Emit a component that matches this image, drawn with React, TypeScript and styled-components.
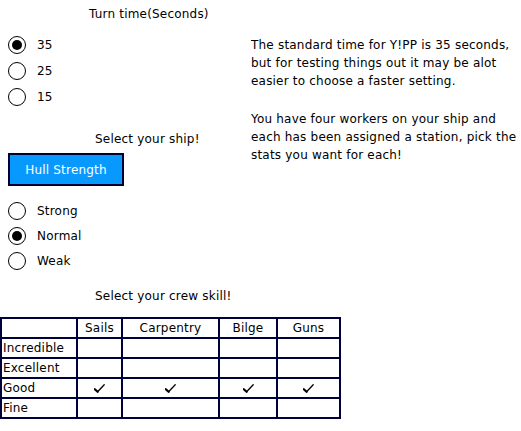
import React from "react";
import styled, { createGlobalStyle } from "styled-components";

const GlobalStyle = createGlobalStyle`
  html, body { margin: 0; padding: 0; background: #ffffff; }
  body {
    font-family: "DejaVu Sans", Verdana, sans-serif;
    font-size: 12px;
    letter-spacing: 0.2px;
    color: #000000;
  }
`;

const Page = styled.div`
  width: 521px;
  height: 431px;
  display: flex;
  flex-direction: column;
  overflow: hidden;
`;

const Heading = styled.div<{ $indent: number; $top: number }>`
  margin-top: ${(p) => p.$top}px;
  padding-left: ${(p) => p.$indent}px;
  height: 18px;
  line-height: 18px;
`;

const TopRow = styled.div`
  display: flex;
  margin-top: 9px;
`;

const LeftCol = styled.div`
  width: 251px;
  display: flex;
  flex-direction: column;
`;

const RightCol = styled.div`
  padding-top: 4px;
  display: flex;
  flex-direction: column;
  gap: 20px;
`;

const Para = styled.p`
  margin: 0;
  line-height: 18px;
  white-space: nowrap;
`;

const RadioList = styled.div<{ $top: number }>`
  margin-top: ${(p) => p.$top}px;
  display: flex;
  flex-direction: column;
`;

const RadioRow = styled.label<{ $h: number }>`
  display: flex;
  align-items: center;
  height: ${(p) => p.$h}px;
  padding-left: 8px;
  gap: 11px;
`;

const RadioCircle = styled.span<{ $on: boolean }>`
  width: 16px;
  height: 16px;
  border: 1.3px solid #000;
  border-radius: 50%;
  display: flex;
  align-items: center;
  justify-content: center;
  box-sizing: content-box;
  &::after {
    content: "";
    width: 10px;
    height: 10px;
    border-radius: 50%;
    background: #000;
    display: ${(p) => (p.$on ? "block" : "none")};
  }
`;

const SubHeading = styled.div<{ $top: number }>`
  margin-top: ${(p) => p.$top}px;
  padding-left: 95px;
  height: 18px;
  line-height: 18px;
`;

const StatButton = styled.button`
  margin: 5px 0 0 8px;
  width: 116px;
  height: 33px;
  box-sizing: border-box;
  border: 2px solid #000033;
  background: #0899ff;
  color: #ffffff;
  font-family: "DejaVu Sans", Verdana, sans-serif;
  font-size: 12px;
  letter-spacing: 0.2px;
  padding: 0;
`;

const Grid = styled.table`
  margin-top: 12px;
  border-collapse: collapse;
  table-layout: fixed;
  width: 341px;
  font-size: 12px;
`;

const Cell = styled.td<{ $label?: boolean }>`
  border: 2px solid #00003a;
  height: 18px;
  padding: 0 ${(p) => (p.$label ? "1px" : "0")};
  text-align: ${(p) => (p.$label ? "left" : "center")};
  line-height: 16px;
  vertical-align: middle;
  white-space: nowrap;
  font-weight: normal;
`;

const CheckIcon = styled.svg`
  display: block;
  margin: 0 auto;
`;

const Check = () => (
  <CheckIcon width="11" height="9" viewBox="0 0 11 9">
    <path d="M0.8 5.2 L3.6 7.8" stroke="#000" strokeWidth="2.2" fill="none" strokeLinecap="round" />
    <path d="M3.6 7.8 L10.2 0.8" stroke="#000" strokeWidth="1.3" fill="none" strokeLinecap="round" />
  </CheckIcon>
);

const turnTimes = [
  { label: "35", on: true },
  { label: "25", on: false },
  { label: "15", on: false },
];

const ships = [
  { label: "Strong", on: false },
  { label: "Normal", on: true },
  { label: "Weak", on: false },
];

const stations = ["Sails", "Carpentry", "Bilge", "Guns"];
const widths = [76, 45, 97, 58, 63];
const skills = [
  { name: "Incredible", checked: false },
  { name: "Excellent", checked: false },
  { name: "Good", checked: true },
  { name: "Fine", checked: false },
];

export default function App() {
  return (
    <Page>
      <GlobalStyle />
      <Heading $indent={89} $top={5}>Turn time(Seconds)</Heading>
      <TopRow>
        <LeftCol>
          <RadioList $top={0}>
            {turnTimes.map((t) => (
              <RadioRow key={t.label} $h={26}>
                <RadioCircle $on={t.on} />
                {t.label}
              </RadioRow>
            ))}
          </RadioList>
          <SubHeading $top={20}>Select your ship!</SubHeading>
          <StatButton>Hull Strength</StatButton>
          <RadioList $top={12}>
            {ships.map((s) => (
              <RadioRow key={s.label} $h={25}>
                <RadioCircle $on={s.on} />
                {s.label}
              </RadioRow>
            ))}
          </RadioList>
        </LeftCol>
        <RightCol>
          <Para>
            The standard time for Y!PP is 35 seconds,
            <br />
            but for testing things out it may be alot
            <br />
            easier to choose a faster setting.
          </Para>
          <Para>
            You have four workers on your ship and
            <br />
            each has been assigned a station, pick the
            <br />
            stats you want for each!
          </Para>
        </RightCol>
      </TopRow>
      <SubHeading $top={14}>Select your crew skill!</SubHeading>
      <Grid>
        <colgroup>
          {widths.map((w, i) => (
            <col key={i} style={{ width: w }} />
          ))}
        </colgroup>
        <thead>
          <tr>
            <Cell as="th" />
            {stations.map((s) => (
              <Cell as="th" key={s}>
                {s}
              </Cell>
            ))}
          </tr>
        </thead>
        <tbody>
          {skills.map((sk) => (
            <tr key={sk.name}>
              <Cell $label>{sk.name}</Cell>
              {stations.map((s) => (
                <Cell key={s}>{sk.checked ? <Check /> : null}</Cell>
              ))}
            </tr>
          ))}
        </tbody>
      </Grid>
    </Page>
  );
}
